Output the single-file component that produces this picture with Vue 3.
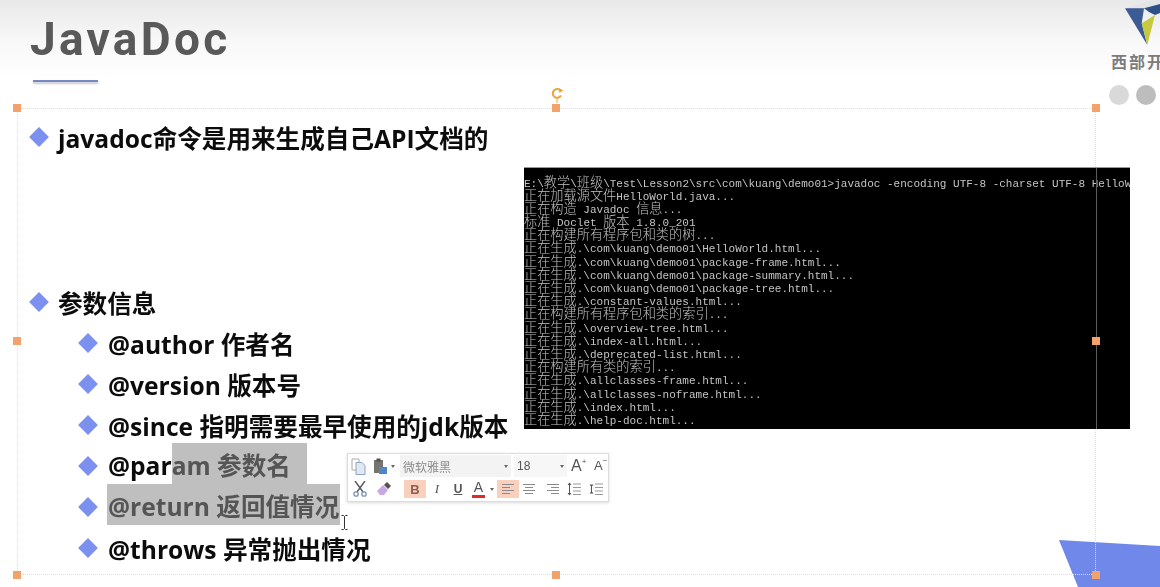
<script setup>
const rawLines = [
  'E:\\教学\\班级\\Test\\Lesson2\\src\\com\\kuang\\demo01>javadoc -encoding UTF-8 -charset UTF-8 HelloWorld.java',
  '正在加载源文件HelloWorld.java...',
  '正在构造 Javadoc 信息...',
  '标准 Doclet 版本 1.8.0_201',
  '正在构建所有程序包和类的树...',
  '正在生成.\\com\\kuang\\demo01\\HelloWorld.html...',
  '正在生成.\\com\\kuang\\demo01\\package-frame.html...',
  '正在生成.\\com\\kuang\\demo01\\package-summary.html...',
  '正在生成.\\com\\kuang\\demo01\\package-tree.html...',
  '正在生成.\\constant-values.html...',
  '正在构建所有程序包和类的索引...',
  '正在生成.\\overview-tree.html...',
  '正在生成.\\index-all.html...',
  '正在生成.\\deprecated-list.html...',
  '正在构建所有类的索引...',
  '正在生成.\\allclasses-frame.html...',
  '正在生成.\\allclasses-noframe.html...',
  '正在生成.\\index.html...',
  '正在生成.\\help-doc.html...'
]
const lines = rawLines.map((t) =>
  t.split(/([\u4e00-\u9fff]+)/).filter(Boolean).map((s) => ({ s, cn: /[\u4e00-\u9fff]/.test(s) }))
)
const handles = ['h-tl', 'h-tc', 'h-tr', 'h-ml', 'h-mr', 'h-bl', 'h-bc', 'h-br']
</script>

<template>
  <div class="slide">
    <div class="top-shade"></div>
    <div class="corner-shape"></div>

    <header class="head">
      <h1 class="title">JavaDoc</h1>
      <div class="rule"></div>
    </header>

    <ul class="bullets">
      <li class="item first"><i class="dia"></i>javadoc命令是用来生成自己API文档的</li>
      <li class="item second"><i class="dia"></i>参数信息</li>
      <li class="item sub"><i class="dia"></i>@author 作者名</li>
      <li class="item sub"><i class="dia"></i>@version 版本号</li>
      <li class="item sub"><i class="dia"></i>@since 指明需要最早使用的jdk版本</li>
      <li class="item sub"><i class="dia"></i>@par<span class="sel sel-a">am 参数名</span></li>
      <li class="item sub"><i class="dia"></i><span class="sel sel-b">@return 返回值情况</span></li>
      <li class="item sub"><i class="dia"></i>@throws 异常抛出情况</li>
    </ul>

    <div class="frame"></div>

    <div class="terminal">
      <div v-for="(line, i) in lines" :key="i" class="tline">
        <span v-for="(seg, j) in line" :key="j" :class="{ cn: seg.cn }">{{ seg.s }}</span>
      </div>
    </div>

    <span v-for="h in handles" :key="h" class="handle" :class="h"></span>
    <svg class="rotate" width="16" height="18" viewBox="0 0 16 18">
      <path d="M11.500 3.600A4.400 4.400 0 1 0 12 8.600" fill="none" stroke="#f0a238" stroke-width="2" />
      <path d="M10 1l4.200 2.600L10.400 6z" fill="#f0a238" />
      <path d="M8 11v5" stroke="#f0a238" stroke-width="1" />
    </svg>

    <div class="logo">
      <svg class="mark" width="35" height="46" viewBox="0 0 35 46">
        <path d="M0 8.300L28 0l7 0v3L19 8.300l-2.300 15z" fill="#e4e4e4" />
        <path d="M0 8.300L22.300 45 16.700 23.300 19 8.300z" fill="#3c5a94" />
        <path d="M16.700 23.300L22.300 45 30 15z" fill="#c6ca3c" />
        <path d="M19 8.300L35 4v9L30 15 24 12z" fill="#2d5089" />
      </svg>
      <div class="brand">西部开源</div>
      <div class="dots"><span class="dot d1"></span><span class="dot d2"></span></div>
    </div>

    <div class="toolbar">
      <div class="row">
        <svg class="ic i-copy" width="15" height="17" viewBox="0 0 15 17">
          <path d="M1 1h7v3M1 1v11h4" fill="none" stroke="#a9a9a9" stroke-width="1" />
          <path d="M5 4.500h6l3 3v9H5z" fill="#dfe8f3" stroke="#8fa4c0" stroke-width="1" />
        </svg>
        <svg class="ic i-paste" width="14" height="16" viewBox="0 0 14 16">
          <path d="M1 2h9v7H6v6H1z" fill="#77746f" />
          <rect x="3.500" y="0.500" width="4" height="3" fill="#55524e" />
          <rect x="6" y="9" width="8" height="7" fill="#4f86c6" />
        </svg>
        <span class="caret c-paste"></span>
        <div class="select font-select"><span class="fname">微软雅黑</span><span class="caret"></span></div>
        <div class="select size-select"><span>18</span><span class="caret"></span></div>
        <span class="grow big">A<sup>+</sup></span>
        <span class="grow small">A<sup>−</sup></span>
      </div>
      <div class="row row2">
        <svg class="ic i-cut" width="14" height="16" viewBox="0 0 14 16">
          <path d="M2 0l8 11M12 0L4 11" stroke="#55585e" stroke-width="1.400" fill="none" />
          <circle cx="3" cy="13" r="2.200" fill="none" stroke="#7d93b5" stroke-width="1.300" />
          <circle cx="11" cy="13" r="2.200" fill="none" stroke="#7d93b5" stroke-width="1.300" />
        </svg>
        <svg class="ic i-brush" width="14" height="14" viewBox="0 0 14 14">
          <path d="M0 9l6-6 5 5-4 5H3z" fill="#c8a8e4" />
          <path d="M7 3l3-3 4 4-3 3z" fill="#55524e" />
        </svg>
        <span class="tb on b-bold">B</span>
        <span class="tb b-i">I</span>
        <span class="tb b-u">U</span>
        <span class="tb b-a">A</span>
        <span class="caret c-a"></span>
        <span class="tb on b-left"><i class="al"><b></b><b class="s"></b><b></b><b class="s"></b></i></span>
        <span class="tb b-center"><i class="al ac"><b></b><b class="s"></b><b></b><b class="s"></b></i></span>
        <span class="tb b-right"><i class="al ar"><b></b><b class="s"></b><b></b><b class="s"></b></i></span>
        <svg class="ic i-ls1" width="14" height="14" viewBox="0 0 14 14">
          <path d="M2.500 1v12" stroke="#555" stroke-width="1" />
          <path d="M0.500 3l2-2.500 2 2.500zM0.500 11l2 2.500 2-2.500z" fill="#555" />
          <path d="M6 2h8M6 5.500h8M6 9h8M6 12.500h8" stroke="#9a9a9a" stroke-width="1" />
        </svg>
        <svg class="ic i-ls2" width="14" height="14" viewBox="0 0 14 14">
          <path d="M2.500 4v6" stroke="#555" stroke-width="1" />
          <path d="M0.500 2.500l2 2.500 2-2.500zM0.500 11.500l2-2.500 2 2.500z" fill="#555" />
          <path d="M6 2h8M6 5.500h8M6 9h8M6 12.500h8" stroke="#9a9a9a" stroke-width="1" />
        </svg>
      </div>
    </div>

    <svg class="ibeam" width="7" height="15" viewBox="0 0 7 15">
      <path d="M0.500 0.500h2l1 1 1-1h2M3.500 1.500v12M0.500 14.500h2l1-1 1 1h2" fill="none" stroke="#333" stroke-width="1" />
    </svg>
  </div>
</template>

<style scoped>
.slide {
  position: relative;
  width: 1160px;
  height: 587px;
  overflow: hidden;
  background: #fff;
  font-family: "Open Sans", "Noto Sans CJK SC", sans-serif;
}
.top-shade {
  position: absolute;
  left: 0;
  right: 0;
  top: 0;
  height: 80px;
  background: linear-gradient(#e8e8e8, #f8f8f8 50%, #fff);
}
.corner-shape {
  position: absolute;
  left: 1059px;
  top: 540px;
  width: 101px;
  height: 47px;
  background: #6f88ea;
  clip-path: polygon(0 0, 100% 6px, 100% 100%, 19px 100%);
}
.head {
  position: relative;
  padding: 9px 0 0 30px;
  height: 108px;
  box-sizing: border-box;
}
.title {
  margin: 0;
  font-family: Roboto, "Open Sans", sans-serif;
  font-size: 46px;
  line-height: 60px;
  font-weight: 700;
  letter-spacing: 3.300px;
  color: #595959;
  filter: blur(0.5px);
}
.rule {
  width: 65px;
  height: 2px;
  margin: 11px 0 0 3px;
  background: #7787c4;
  box-shadow: 0 2px 2px rgba(90, 90, 110, 0.35);
}
.bullets {
  position: relative;
  list-style: none;
  margin: 0;
  padding: 8px 0 0 30px;
  color: #0c0c0c;
  font-size: 24.600px;
  font-weight: 700;
  filter: blur(0.35px);
}
.item {
  display: flex;
  align-items: center;
  height: 41px;
  white-space: pre;
}
.second {
  margin-top: 124px;
}
.sub {
  padding-left: 49px;
}
.dia {
  flex: none;
  width: 14px;
  height: 14px;
  margin: 0 12px 0 2px;
  background: #7b90ef;
  transform: rotate(45deg);
}
.sub .dia {
  margin-right: 13px;
}
.sel {
  display: block;
  height: 41px;
  line-height: 45px;
  margin-bottom: 4px;
  background: #bfbfbf;
  color: #555;
}
.sel-a {
  padding-right: 16px;
}
.sel-b {
  margin-left: -1px;
  padding: 0 1px;
}
.terminal {
  position: absolute;
  left: 524px;
  top: 167px;
  width: 606px;
  height: 262px;
  padding-top: 6.500px;
  box-sizing: border-box;
  overflow: hidden;
  background: #000;
  color: #c4c4c4;
  font-family: "Liberation Mono", "Noto Sans CJK SC", monospace;
  font-size: 11px;
  border-top: 1px solid #9a9a9a;
}
.terminal::after {
  content: "";
  position: absolute;
  left: 572px;
  top: 0;
  bottom: 0;
  width: 1px;
  background: #5c5c5c;
}
.tline {
  height: 13.200px;
  line-height: 13.200px;
  white-space: pre;
  filter: blur(0.35px);
}
.cn {
  font-family: "Noto Sans CJK SC", sans-serif;
  font-size: 13.200px;
  font-weight: 300;
}
.frame {
  position: absolute;
  left: 17px;
  top: 108px;
  width: 1079px;
  height: 467px;
  box-sizing: border-box;
  border: 1px dotted #eadccb;
}
.handle {
  position: absolute;
  width: 8px;
  height: 8px;
  margin: -4px 0 0 -4px;
  background: #f4a26c;
}
.h-tl { left: 17px; top: 108px; }
.h-tc { left: 556px; top: 108px; }
.h-tr { left: 1096px; top: 108px; }
.h-ml { left: 17px; top: 341px; }
.h-mr { left: 1096px; top: 341px; }
.h-bl { left: 17px; top: 575px; }
.h-bc { left: 556px; top: 575px; }
.h-br { left: 1096px; top: 575px; }
.rotate {
  position: absolute;
  left: 549px;
  top: 87px;
}
.logo {
  position: absolute;
  left: 1109px;
  top: 0;
  width: 51px;
  height: 110px;
  overflow: hidden;
}
.mark {
  position: absolute;
  left: 16px;
  top: 0;
  filter: blur(0.4px);
}
.brand {
  position: absolute;
  left: 2px;
  top: 50px;
  font-family: "Noto Sans CJK SC", sans-serif;
  font-size: 16px;
  line-height: 22px;
  font-weight: 700;
  letter-spacing: 2px;
  color: #7c7c7c;
  white-space: nowrap;
}
.dots {
  position: absolute;
  left: 0;
  top: 85px;
  display: flex;
  gap: 7px;
}
.dot {
  width: 20px;
  height: 20px;
  border-radius: 50%;
}
.d1 { background: #d9d9d9; }
.d2 { background: #bdbdbd; }

.toolbar {
  position: absolute;
  left: 347px;
  top: 453px;
  width: 262px;
  height: 49px;
  box-sizing: border-box;
  background: #fff;
  border: 1px solid #dcdcdc;
  box-shadow: 0 1px 3px rgba(0, 0, 0, 0.15);
  font-family: "Liberation Sans", "Noto Sans CJK SC", sans-serif;
  color: #555;
  filter: blur(0.3px);
}
.row {
  position: relative;
  display: flex;
  align-items: center;
  height: 24px;
}
.row2 {
  height: 22px;
}
.row > * {
  flex: none;
}
.ic {
  display: block;
}
.i-copy { margin-left: 3px; }
.i-paste { margin-left: 7px; }
.c-paste { margin-left: 4px; }
.caret {
  display: inline-block;
  width: 0;
  height: 0;
  border-left: 2.500px solid transparent;
  border-right: 2.500px solid transparent;
  border-top: 3px solid #666;
}
.select {
  display: flex;
  align-items: center;
  justify-content: space-between;
  height: 22px;
  box-sizing: border-box;
  background: #f3f3f3;
  font-size: 12px;
  padding: 0 3px;
}
.font-select {
  width: 111px;
  margin-left: 5px;
}
.fname {
  color: #8d8d8d;
}
.size-select {
  width: 54px;
  margin-left: 2px;
  background: #f7f7f7;
  border-left: 1px solid #fff;
}
.grow {
  font-size: 16px;
  line-height: 20px;
  color: #555;
}
.grow sup {
  font-size: 8px;
  line-height: 0;
  vertical-align: 7px;
}
.big { margin-left: 4px; width: 20px; }
.small { margin-left: 3px; font-size: 13px; }
.tb {
  display: flex;
  align-items: center;
  justify-content: center;
  height: 18px;
  font-size: 13px;
}
.on {
  background: #f9cfbd;
}
.i-cut { margin-left: 5px; }
.i-brush { margin-left: 10px; }
.b-bold {
  width: 22px;
  margin-left: 13px;
  font-weight: 700;
  color: #8c5f50;
}
.b-i {
  width: 12px;
  margin-left: 5px;
  font-style: italic;
  font-family: "Liberation Serif", serif;
}
.b-u {
  width: 12px;
  margin-left: 9px;
  font-weight: 700;
  text-decoration: underline;
  font-size: 12px;
}
.b-a {
  width: 13px;
  margin-left: 8px;
  font-size: 14px;
  line-height: 13px;
  height: 15px;
  border-bottom: 3px solid #e02b2b;
  box-sizing: content-box;
}
.c-a { margin-left: 5px; }
.b-left {
  width: 22px;
  margin-left: 3px;
}
.b-center {
  width: 14px;
  margin-left: 3px;
}
.b-right {
  width: 14px;
  margin-left: 10px;
}
.al {
  display: flex;
  flex-direction: column;
  gap: 2px;
  width: 12px;
}
.al b {
  display: block;
  height: 1px;
  width: 12px;
  background: #8a8a8a;
}
.al b.s { width: 8px; }
.ac { align-items: center; }
.ar { align-items: flex-end; }
.i-ls1 { margin-left: 7px; }
.i-ls2 { margin-left: 8px; }
.ibeam {
  position: absolute;
  left: 341px;
  top: 515px;
}
</style>
